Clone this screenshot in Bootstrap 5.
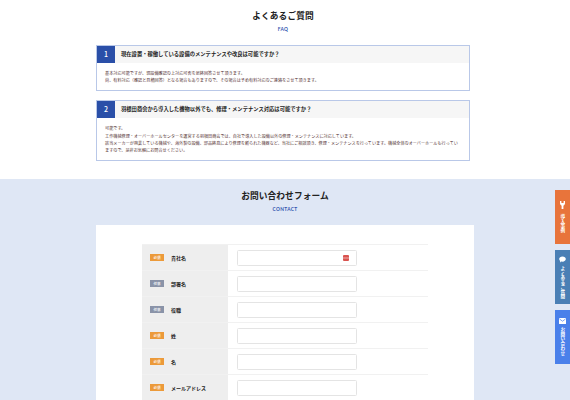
<!DOCTYPE html>
<html lang="ja">
<head>
<meta charset="UTF-8" />
<meta name="viewport" content="width=device-width, initial-scale=1.0" />
<title>よくあるご質問</title>
<link href="https://cdn.jsdelivr.net/npm/bootstrap@5.3.0/dist/css/bootstrap.min.css" rel="stylesheet" />
<style>
  html, body { height: 400px; overflow: hidden; }
  body { font-family: "Noto Sans CJK JP", "Noto Sans", sans-serif; color: #222; background: #fff; position: relative; }
  .sec-title { font-size: 8.7px; font-weight: 700; line-height: 12px; letter-spacing: .1px; margin: 0; color: #222; }
  .sec-sub { font-size: 4.8px; font-weight: 700; line-height: 7px; color: #2f55b0; margin-top: 4px; letter-spacing: .35px; font-family: "Lato", sans-serif; }
  .faq-wrap { padding-top: 10px; height: 179px; }
  .faq-inner { margin: 0 100px 0 96px; }
  .faq-list { margin-top: 12px; }
  .faq-box { border: 1px solid #b9c8e8; background: #fff; margin-bottom: 9px; }
  .faq-q { height: 17px; background: #f6f6f6; }
  .faq-num { width: 18px; background: #2a4fa8; color: #fff; font-size: 7px; font-weight: 500; line-height: 17px; }
  .faq-qtext { font-size: 5.3px; font-weight: 700; padding-left: 6px; line-height: 17px; color: #222; }
  .faq-a { font-size: 4.13px; line-height: 7.2px; color: #553333; padding: 7px 8px 6px 8px; }
  .contact-wrap { background: #dfe7f5; height: 221px; padding-top: 11px; overflow: hidden; }
  .contact-card { background: #fff; margin: 12px 96px 0 96px; padding: 19px 46px 0 46px; height: 175px; }
  .form-row { height: 26px; border-top: 1px solid #f1f1f1; }
  .form-lab { width: 86px; background: #eee; padding-left: 8px; font-size: 5px; font-weight: 700; color: #222; }
  .req-tag { width: 14px; height: 7px; line-height: 7px; text-align: center; font-size: 3.6px; font-weight: 500; color: #fff; margin-right: 7px; }
  .req-on { background: #ec9a3a; }
  .req-off { background: #8a93a8; }
  .form-cell { padding-left: 9px; }
  .fake-input { width: 120px; height: 16px; border: 1px solid #e4e4e4; border-radius: 1.5px; background: #fff; padding-right: 7px; }
  .side-tab { position: absolute; right: 0; width: 15px; height: 54px; color: #fff; font-size: 4.6px; font-weight: 700; gap: 3px; }
  .side-tab span { writing-mode: vertical-rl; line-height: 1; letter-spacing: .1px; white-space: nowrap; }
  .tab-a { top: 190px; background: #e8743b; gap: 5px; }
  .tab-b { top: 250px; background: #4a7fb5; }
  .tab-c { top: 310px; background: #4a80ea; }
</style>
</head>
<body>
  <section class="faq-wrap">
    <div class="faq-inner">
      <div class="text-center">
        <h2 class="sec-title">よくあるご質問</h2>
        <div class="sec-sub">FAQ</div>
      </div>
      <div class="faq-list">
        <div class="faq-box">
          <div class="faq-q d-flex">
            <div class="faq-num text-center">1</div>
            <div class="faq-qtext">現在設置・稼働している設備のメンテナンスや改良は可能ですか？</div>
          </div>
          <div class="faq-a">基本対応可能ですが、現設備確認の上対応可否を最終回答させて頂きます。<br />尚、有料対応（確認と見積回答）となる場合もありますので、その場合は予め有料対応のご連絡をさせて頂きます。</div>
        </div>
        <div class="faq-box">
          <div class="faq-q d-flex">
            <div class="faq-num text-center">2</div>
            <div class="faq-qtext">羽根田商会から導入した機物以外でも、修理・メンテナンス対応は可能ですか？</div>
          </div>
          <div class="faq-a">可能です。<br />工作機械修理・オーバーホールセンターを運営する羽根田商会では、自社で導入した設備以外の修理・メンテナンスに対応しています。<br />該当メーカーが廃業している機械や、海外製の設備、部品終息により修理を断られた機器など、当社にご相談頂き、修理・メンテナンスを行っています。機械全体のオーバーホールも行っていますので、是非お気軽にお問合せください。</div>
        </div>
      </div>
    </div>
  </section>

  <section class="contact-wrap">
    <div class="text-center">
      <h2 class="sec-title">お問い合わせフォーム</h2>
      <div class="sec-sub">CONTACT</div>
    </div>
    <div class="contact-card">
      <div class="form-row d-flex">
        <div class="form-lab d-flex align-items-center"><span class="req-tag req-on">必須</span>貴社名</div>
        <div class="form-cell d-flex align-items-center">
          <div class="fake-input d-flex align-items-center justify-content-end">
            <svg width="6" height="6" viewBox="0 0 6 6"><rect width="6" height="6" rx="1" fill="#d9534f" /><rect y="2.6" width="6" height=".8" fill="#f3c6c4" /></svg>
          </div>
        </div>
      </div>
      <div class="form-row d-flex">
        <div class="form-lab d-flex align-items-center"><span class="req-tag req-off">任意</span>部署名</div>
        <div class="form-cell d-flex align-items-center"><div class="fake-input"></div></div>
      </div>
      <div class="form-row d-flex">
        <div class="form-lab d-flex align-items-center"><span class="req-tag req-off">任意</span>役職</div>
        <div class="form-cell d-flex align-items-center"><div class="fake-input"></div></div>
      </div>
      <div class="form-row d-flex">
        <div class="form-lab d-flex align-items-center"><span class="req-tag req-on">必須</span>姓</div>
        <div class="form-cell d-flex align-items-center"><div class="fake-input"></div></div>
      </div>
      <div class="form-row d-flex">
        <div class="form-lab d-flex align-items-center"><span class="req-tag req-on">必須</span>名</div>
        <div class="form-cell d-flex align-items-center"><div class="fake-input"></div></div>
      </div>
      <div class="form-row d-flex">
        <div class="form-lab d-flex align-items-center"><span class="req-tag req-on">必須</span>メールアドレス</div>
        <div class="form-cell d-flex align-items-center"><div class="fake-input"></div></div>
      </div>
    </div>
  </section>

  <!-- side tabs -->
  <a class="side-tab tab-a d-flex flex-column align-items-center justify-content-center text-decoration-none">
    <svg width="7" height="8" viewBox="0 0 7 8"><path d="M1 0v2.5a2.5 2.5 0 0 0 1.6 2.2V8h1.8V4.7A2.5 2.5 0 0 0 6 2.5V0L4.6 0v2H2.4V0z" fill="#fff" /></svg>
    <span>導入事例</span>
  </a>
  <a class="side-tab tab-b d-flex flex-column align-items-center justify-content-center text-decoration-none">
    <svg width="7" height="7" viewBox="0 0 7 7"><path d="M3.5.5C5.4.5 6.8 1.6 6.8 3.1S5.4 5.7 3.5 5.7c-.4 0-.8 0-1.1-.1L1 6.6l.2-1.6C.5 4.5.2 3.8.2 3.1.2 1.6 1.6.5 3.5.5z" fill="#fff" /></svg>
    <span>よくあるご質問</span>
  </a>
  <a class="side-tab tab-c d-flex flex-column align-items-center justify-content-center text-decoration-none">
    <svg width="7" height="6" viewBox="0 0 7 6"><rect width="7" height="6" rx=".6" fill="#fff" /><path d="M.5 1l3 2.2 3-2.2" fill="none" stroke="#4a80ea" stroke-width=".7" /></svg>
    <span>お問い合わせ</span>
  </a>

  <script src="https://cdn.jsdelivr.net/npm/bootstrap@5.3.0/dist/js/bootstrap.bundle.min.js"></script>
</body>
</html>
